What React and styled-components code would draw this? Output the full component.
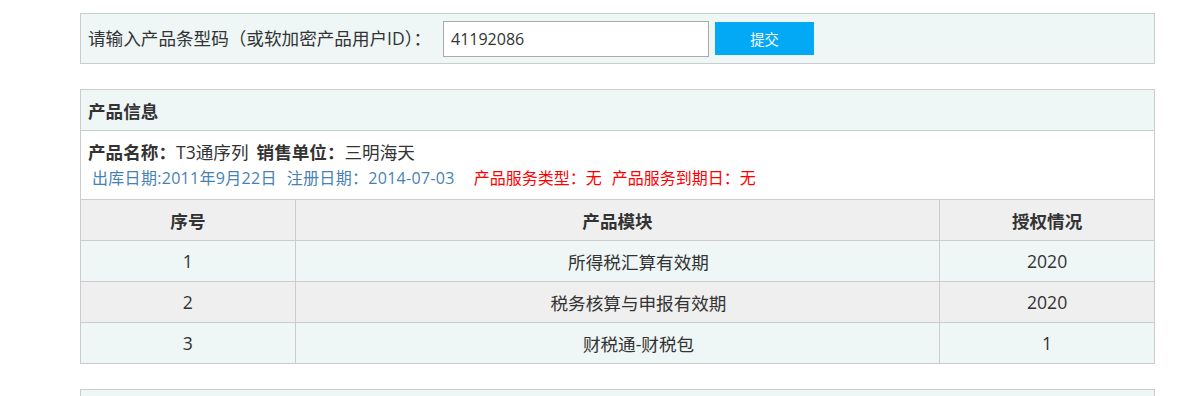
import React from "react";
import styled, { createGlobalStyle } from "styled-components";

const Global = createGlobalStyle`
  html, body { margin: 0; padding: 0; background: #fff; }
  body {
    font-family: "Open Sans", "Noto Sans CJK SC", sans-serif;
    color: #333;
  }
`;

const Page = styled.div`
  width: 1075px;
  margin-left: 80px;
  padding-top: 13px;
  display: flex;
  flex-direction: column;
  gap: 25px;
`;

const SearchBar = styled.div`
  box-sizing: border-box;
  height: 51px;
  border: 1px solid #ccc;
  background: #eef6f6;
  display: flex;
  align-items: center;
  padding-left: 7px;
`;

const Label = styled.span`
  font-size: 17.6px;
  color: #333;
  width: 355px;
  margin-top: -2px;
`;

const Input = styled.input`
  box-sizing: border-box;
  width: 266px;
  height: 36px;
  border: 1px solid #aaa;
  background: #fff;
  font-family: "Open Sans", "Noto Sans CJK SC", sans-serif;
  font-size: 16px;
  color: #333;
  padding: 0 7px;
  outline: none;
  margin-top: 1px;
`;

const Button = styled.button`
  box-sizing: border-box;
  width: 99px;
  height: 33px;
  margin-left: 6px;
  border: none;
  background: #03a9f4;
  color: #fff;
  font-family: "Noto Sans CJK SC", sans-serif;
  font-size: 14.3px;
  cursor: pointer;
`;

const Panel = styled.div`
  border: 1px solid #ccc;
  border-bottom: none;
`;

const PanelHeader = styled.div`
  box-sizing: border-box;
  height: 41px;
  background: #eef6f6;
  border-bottom: 1px solid #ccc;
  display: flex;
  align-items: center;
  padding-left: 7px;
  font-size: 17.6px;
  font-weight: bold;
  color: #333;
`;

const Info = styled.div`
  box-sizing: border-box;
  background: #fff;
  padding: 8px 7px 0 7px;
  height: 68px;
`;

const NameLine = styled.div`
  font-size: 17.6px;
  line-height: 26px;
  color: #333;
  display: flex;
  gap: 8px;
`;

const Strong = styled.b`
  font-weight: bold;
`;

const DateLine = styled.div`
  margin-top: 2px;
  padding-left: 4px;
  font-size: 16px;
  line-height: 23px;
  display: flex;
`;

const Blue = styled.span`
  color: #4682b4;
  letter-spacing: 0.3px;
  margin-right: ${(p) => p.$gap || 0}px;
`;

const Red = styled.span`
  color: #ff0000;
  margin-right: ${(p) => p.$gap || 0}px;
`;

const Table = styled.table`
  border-collapse: collapse;
  table-layout: fixed;
  margin-left: -1px;
  width: calc(100% + 2px);
`;

const Th = styled.th`
  height: 40px;
  border: 1px solid #ccc;
  background: #efefef;
  font-size: 17.6px;
  font-weight: bold;
  color: #333;
  padding: 0;
`;

const Td = styled.td`
  height: 40px;
  border: 1px solid #ccc;
  background: ${(p) => (p.$alt ? "#efefef" : "#eef6f6")};
  font-size: 17.6px;
  color: #333;
  text-align: center;
  padding: 0 0 0 ${(p) => (p.$wide ? 42 : 0)}px;
`;

const NextPanel = styled.div`
  height: 20px;
  border: 1px solid #ccc;
  border-bottom: none;
  background: #eef6f6;
`;

const rows = [
  ["1", "所得税汇算有效期", "2020"],
  ["2", "税务核算与申报有效期", "2020"],
  ["3", "财税通-财税包", "1"],
];

export default function App() {
  return (
    <>
      <Global />
      <Page>
        <SearchBar>
          <Label>请输入产品条型码（或软加密产品用户ID）：</Label>
          <Input defaultValue="41192086" />
          <Button>提交</Button>
        </SearchBar>
        <Panel>
          <PanelHeader>产品信息</PanelHeader>
          <Info>
            <NameLine>
              <span>
                <Strong>产品名称：</Strong>T3通序列
              </span>
              <span>
                <Strong>销售单位：</Strong>三明海天
              </span>
            </NameLine>
            <DateLine>
              <Blue $gap={10}>出库日期:2011年9月22日</Blue>
              <Blue $gap={19}>注册日期：2014-07-03</Blue>
              <Red $gap={10}>产品服务类型：无</Red>
              <Red>产品服务到期日：无</Red>
            </DateLine>
          </Info>
          <Table>
            <colgroup>
              <col style={{ width: "20%" }} />
              <col style={{ width: "60%" }} />
              <col style={{ width: "20%" }} />
            </colgroup>
            <thead>
              <tr>
                <Th>序号</Th>
                <Th>产品模块</Th>
                <Th>授权情况</Th>
              </tr>
            </thead>
            <tbody>
              {rows.map((r, i) => (
                <tr key={r[0]}>
                  <Td $alt={i % 2 === 1}>{r[0]}</Td>
                  <Td $alt={i % 2 === 1} $wide>
                    {r[1]}
                  </Td>
                  <Td $alt={i % 2 === 1}>{r[2]}</Td>
                </tr>
              ))}
            </tbody>
          </Table>
        </Panel>
        <NextPanel />
      </Page>
    </>
  );
}
